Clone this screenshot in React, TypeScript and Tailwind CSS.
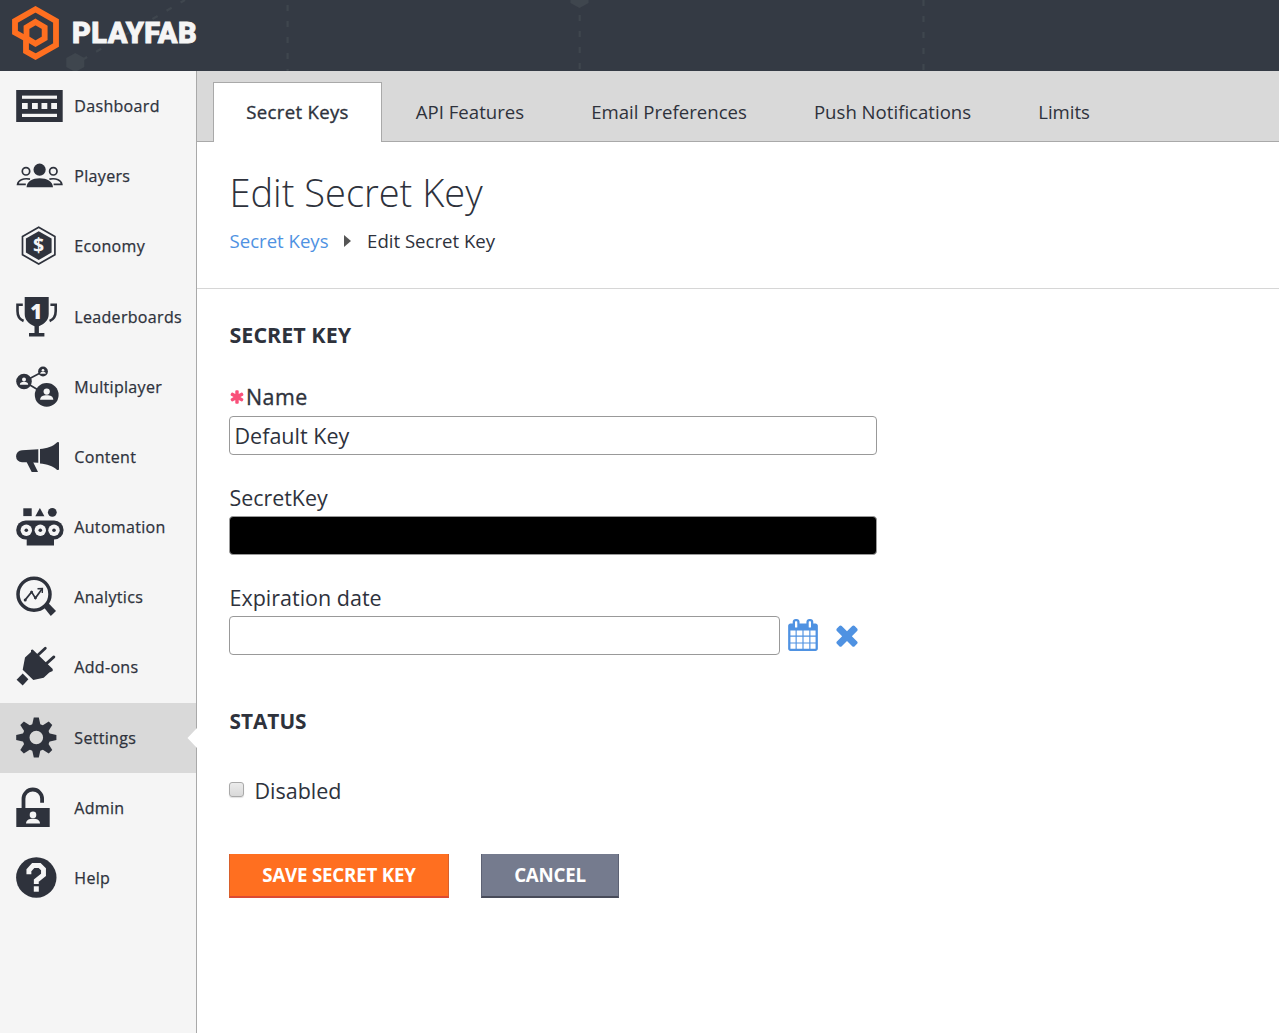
import type { ReactNode } from 'react';

const INK = '#2e323c';
const PAPER = '#f5f5f5';

function Person({ x, y, s }: { x: number; y: number; s: number }) {
  return (
    <g transform={`translate(${x} ${y}) scale(${s})`} fill={PAPER}>
      <circle cx="0" cy="-3" r="3.3" />
      <path d="M-7 5.6C-6.8 2 -4 .8 0 .8S6.8 2 7 5.6z" />
    </g>
  );
}

function Icon({ children, dy = 0 }: { children: ReactNode; dy?: number }) {
  return (
    <svg width="48" height="48" viewBox="0 0 48 48" className="shrink-0" fill={INK}>
      <g transform={`translate(0 ${dy})`}>{children}</g>
    </svg>
  );
}

const dashboardIcon = (
  <Icon>
    <rect x="0.2" y="8" width="46.5" height="32" />
    <g fill={PAPER}>
      <rect x="6" y="13.6" width="35" height="3.2" />
      <rect x="6" y="31.8" width="35" height="3.2" />
      <rect x="6" y="21" width="5.7" height="6" />
      <rect x="16" y="21" width="5.8" height="6" />
      <rect x="25.5" y="21" width="5.8" height="6" />
      <rect x="35.2" y="21" width="5.8" height="6" />
    </g>
  </Icon>
);

const playersIcon = (
  <Icon dy={0.5}>
    <circle cx="23.6" cy="17.2" r="6.1" />
    <path d="M10.5 34.8C11 28.5 16.5 25.8 23.7 25.8S36.5 28.5 37 34.8z" />
    <g fill="none" stroke={INK} strokeWidth="1.7">
      <circle cx="10" cy="18.8" r="3.7" />
      <circle cx="37.3" cy="18.8" r="3.7" />
      <path d="M9.8 31.8H1.6C2.2 27.6 7 25.4 14 26.6" />
      <path d="M37.6 31.8H45.8C45.2 27.6 40.4 25.4 33.4 26.6" />
    </g>
  </Icon>
);

const economyIcon = (
  <Icon dy={0.7}>
    <path d="M22.7 4.5L38.9 13.8V32L22.7 41.4L6.5 32V13.8z" fill="none" stroke={INK} strokeWidth="1.7" />
    <path d="M22.7 8.6L35.6 15.9V29.9L22.7 37.2L9.9 29.9V15.9z" />
    <text x="22.7" y="29.6" textAnchor="middle" fill={PAPER} className="font-['Open_Sans'] text-[19.5px] font-bold">$</text>
  </Icon>
);

const leaderboardsIcon = (
  <Icon>
    <path d="M8.7 4H32.7V21C32.7 27 28.5 31 22.9 33.2V40H28.4V43.5H13V40H18.5V33.2C12.9 31 8.7 27 8.7 21z" />
    <g fill="none" stroke={INK} strokeWidth="2.6">
      <path d="M6.8 11.8H1.5V18C1.5 23 3.5 26.4 7.6 28" />
      <path d="M34.4 11.8H39.7V18C39.7 23 37.7 26.4 33.6 28" />
    </g>
    <text x="20.2" y="25.6" textAnchor="middle" fill={PAPER} className="font-['Open_Sans'] text-[20.5px] font-extrabold">1</text>
  </Icon>
);

const multiplayerIcon = (
  <Icon>
    <path d="M27 8.5L8 18.5L30.7 31.9" fill="none" stroke={INK} strokeWidth="1.7" />
    <circle cx="30.7" cy="31.9" r="11.9" />
    <circle cx="8" cy="18.5" r="7.8" />
    <circle cx="27" cy="8.5" r="4.9" />
    <Person x={30.7} y={31.4} s={0.95} />
    <Person x={8} y={18.3} s={0.6} />
    <Person x={27} y={8.4} s={0.4} />
  </Icon>
);

const contentIcon = (
  <Icon>
    <path d="M6 17.3L22.3 16.2V29.8L17.3 29.4L22 38.9H15.7L10.7 29.2H6A5.9 5.9 0 0 1 6 17.3z" />
    <path d="M24 15.9C31 15.3 37 13.3 40.6 9.7C41.5 8.8 43 8.9 43 10.2V36C43 37.2 41.5 37.3 40.6 36.4C37 33 31 31.1 24 30.4z" />
  </Icon>
);

const automationIcon = (
  <Icon dy={0.3}>
    <rect x="7.3" y="5" width="8.4" height="7.8" />
    <path d="M23.9 4.6L28.4 12.9H19.3z" />
    <circle cx="36.3" cy="9" r="4.4" />
    <rect x="0.2" y="17.2" width="47.4" height="19" rx="9.5" />
    <rect x="10.7" y="33" width="27.3" height="9.2" />
    {[10.3, 24.3, 38].map((x) => (
      <g key={x}>
        <circle cx={x} cy="26.9" r="5.7" fill={PAPER} />
        <circle cx={x} cy="26.9" r="1.8" />
      </g>
    ))}
  </Icon>
);

const analyticsIcon = (
  <Icon dy={0.5}>
    <circle cx="18" cy="20.7" r="16" fill="none" stroke={INK} strokeWidth="3.5" />
    <path d="M27.6 33.6L32.3 29.6L40 37.4L34.8 42.6z" />
    <g fill="none" stroke={INK} strokeWidth="1.7">
      <path d="M9.2 26.4L15.6 18.4L19.4 24.6L25.8 15.8" />
      <path d="M21.5 15.2L26.4 15L26.3 19.6" strokeWidth="1.4" />
    </g>
    <circle cx="9.2" cy="26.4" r="1.5" />
    <circle cx="15.6" cy="18.6" r="1.4" />
    <circle cx="19.4" cy="24.4" r="1.4" />
  </Icon>
);

const addonsIcon = (
  <Icon>
    <path d="M6.7 29.4L12.4 35.2L6.7 41.4L.6 35.7z" />
    <path d="M15 5.9L16.7 5.5L36.7 25.1V27.1L33.3 28.4L27.7 33.7L17.3 36.1L6.7 25.7L9 13.4L15 8.1z" />
    <path d="M21.5 11.5L29.3 4.3M29.8 20.1L37.9 12.9" stroke={INK} strokeWidth="2.8" strokeLinecap="round" />
  </Icon>
);

const settingsIcon = (
  <Icon>
    <circle cx="20.3" cy="23.5" r="10.3" fill="none" stroke={INK} strokeWidth="7" />
    {[0, 45, 90, 135, 180, 225, 270, 315].map((a) => (
      <path key={a} d="M15.9 12L17.8 3.4H22.8L24.7 12z" transform={`rotate(${a} 20.3 23.5)`} />
    ))}
  </Icon>
);

const adminIcon = (
  <Icon>
    <rect x="0.3" y="24" width="33.4" height="19" />
    <path d="M7.5 25V14.8A9.3 9.3 0 0 1 26.1 14.8V18.8" fill="none" stroke={INK} strokeWidth="3.8" />
    <Person x={17} y={33.9} s={1} />
  </Icon>
);

const helpIcon = (
  <Icon dy={0.3}>
    <circle cx="20.3" cy="23.2" r="20.2" />
    <path d="M12.9 20V16L17.2 11.2H23.6L27.5 15V20.5L20.3 26.4V29.6" fill="none" stroke={PAPER} strokeWidth="4.9" />
    <rect x="17.8" y="32" width="5" height="5.4" fill={PAPER} />
  </Icon>
);

const NAV: { label: string; icon: ReactNode; active?: boolean }[] = [
  { label: 'Dashboard', icon: dashboardIcon },
  { label: 'Players', icon: playersIcon },
  { label: 'Economy', icon: economyIcon },
  { label: 'Leaderboards', icon: leaderboardsIcon },
  { label: 'Multiplayer', icon: multiplayerIcon },
  { label: 'Content', icon: contentIcon },
  { label: 'Automation', icon: automationIcon },
  { label: 'Analytics', icon: analyticsIcon },
  { label: 'Add-ons', icon: addonsIcon },
  { label: 'Settings', icon: settingsIcon, active: true },
  { label: 'Admin', icon: adminIcon },
  { label: 'Help', icon: helpIcon },
];

const TABS = ['API Features', 'Email Preferences', 'Push Notifications', 'Limits'];

function Header() {
  return (
    <header className="relative flex h-[71px] shrink-0 items-start overflow-hidden bg-[#343a44] pl-3 pt-1.5">
      <svg className="absolute inset-0" width="1279" height="71" viewBox="0 0 1279 71" aria-hidden="true">
        <g stroke="#3f464e" strokeWidth="2.2" fill="none">
          <path d="M287.6 5V71" strokeDasharray="6 10" />
          <path d="M579.7 15V71" strokeDasharray="6 10" />
          <path d="M923.5 0V71" strokeDasharray="6 10" />
          <path d="M82 60L185 0" strokeDasharray="6 10.3" />
        </g>
        <path d="M75.3 53L84.3 58V67L75.3 72L66.3 67V58zM570.5 0H588.5V3L579.5 8L570.5 3z" fill="#3f464e" />
      </svg>
      <svg className="relative" width="47" height="54" viewBox="36 18 141 162">
        <g fill="none" stroke="#ff6f20" strokeWidth="17.5">
          <path d="M106.5 66L134 82V115L106.5 131L79.5 115V82z" />
          <path d="M80 117L45 97.5V63L106.5 28L168 63V135L106.5 170L78 154V113" />
        </g>
      </svg>
      <span className="relative ml-[13px] mt-[9px] font-[Roboto] text-[29px] font-black leading-9 tracking-[0.4px] text-[#f5f5f5] [-webkit-text-stroke:0.8px_#f5f5f5]">
        PLAYFAB
      </span>
    </header>
  );
}

function Sidebar() {
  return (
    <nav className="w-[197px] shrink-0 border-r border-[#a9a9a9] bg-[#f5f5f5]">
      {NAV.map((item) => (
        <a
          key={item.label}
          className={
            item.active
              ? 'relative flex h-[70.2px] items-center gap-[10.3px] bg-[#d9d9d9] pl-4'
              : 'relative flex h-[70.2px] items-center gap-[10.3px] pl-4'
          }
        >
          {item.icon}
          <span className="-mt-[0.3px] text-base font-medium leading-6 tracking-[0.32px] [-webkit-text-stroke:0.25px_currentColor]">
            {item.label}
          </span>
          {item.active && (
            <svg className="absolute -right-px top-[25px]" width="10" height="20" viewBox="0 0 10 20">
              <path d="M10 0V20L0.5 10z" fill="#fff" />
            </svg>
          )}
        </a>
      ))}
    </nav>
  );
}

export default function App() {
  return (
    <div className="flex h-[1033px] flex-col bg-white font-['Open_Sans',sans-serif] text-[#2e323c]">
      <Header />
      <div className="flex min-h-0 flex-1">
        <Sidebar />
        <main className="min-w-0 flex-1">
          <div className="flex h-[71px] items-end border-b border-[#a9a9a9] bg-[#d9d9d9] pl-4 text-[18.6px]">
            <a className="-mb-px flex h-[60px] w-[169px] items-center justify-center border border-b-0 border-[#a9a9a9] bg-white pb-0.5 font-medium tracking-[0.3px] [-webkit-text-stroke:0.35px_currentColor]">
              Secret Keys
            </a>
            {TABS.map((tab) => (
              <a key={tab} className="flex h-[59px] items-center pl-[33.8px] pr-[33.3px]">{tab}</a>
            ))}
          </div>

          <div className="h-[147px] border-b border-[#d6d6d6] pl-[32.5px] pt-[23px]">
            <h1 className="text-[38px] font-light leading-[54px]">Edit Secret Key</h1>
            <div className="mt-2 flex h-7 items-center text-[18.6px]">
              <a className="text-[#4f92e2]">Secret Keys</a>
              <svg className="ml-[15px] mr-[16.5px]" width="7" height="12" viewBox="0 0 7 12">
                <path d="M0 0L7 6L0 12z" fill="#555" />
              </svg>
              <span>Edit Secret Key</span>
            </div>
          </div>

          <form className="pl-8 pt-8 text-[21.4px] leading-7">
            <h2 className="pl-[0.5px] text-[21.5px] font-bold">SECRET KEY</h2>

            <label className="mt-[34px] flex items-center font-medium tracking-[0.45px] [-webkit-text-stroke:0.35px_currentColor]">
              <svg className="mr-px -mt-px" width="16" height="16" viewBox="100 0 1592 1792" fill="#f9507a">
                <path d="M1546 1050q46 26 59.5 77.5t-12.5 97.5l-64 110q-26 46-77.5 59.5t-97.5-12.5l-266-153v307q0 52-38 90t-90 38h-128q-52 0-90-38t-38-90v-307l-266 153q-46 26-97.5 12.5t-77.5-59.5l-64-110q-26-46-12.5-97.5t59.5-77.5l266-154-266-154q-46-26-59.5-77.5t12.5-97.5l64-110q26-46 77.5-59.5t97.5 12.5l266 153v-307q0-52 38-90t90-38h128q52 0 90 38t38 90v307l266-153q46-26 97.5-12.5t77.5 59.5l64 110q26 46 12.5 97.5t-59.5 77.5l-266 154z" />
              </svg>
              Name
            </label>
            <input
              className="mt-[5px] block h-[39px] w-[648px] rounded border border-[#999] bg-white px-[4.5px] text-[21.5px] outline-none"
              defaultValue="Default Key"
            />

            <label className="mt-[29px] block pl-[0.5px]">SecretKey</label>
            <div className="mt-1 h-[39px] w-[648px] rounded border border-[#999] bg-black" />

            <label className="mt-[29px] block pl-[0.5px] text-[21.5px]">Expiration date</label>
            <div className="mt-1 flex items-start">
              <input className="h-[39px] w-[551px] rounded border border-[#999] bg-white px-[5px] outline-none" />
              <svg className="ml-[7px] mt-[3px]" width="32" height="32" viewBox="0 0 1792 1792" fill="#4f92e2">
                <path d="M192 1664h288v-288h-288v288zm352 0h320v-288h-320v288zm-352-352h288v-320h-288v320zm352 0h320v-320h-320v320zm-352-384h288v-288h-288v288zm736 736h320v-288h-320v288zm-384-736h320v-288h-320v288zm768 736h288v-288h-288v288zm-384-352h320v-320h-320v320zm-352-864v-288q0-13-9.5-22.5t-22.5-9.5h-64q-13 0-22.5 9.5t-9.5 22.5v288q0 13 9.5 22.5t22.5 9.5h64q13 0 22.5-9.5t9.5-22.5zm736 864h288v-320h-288v320zm-384-384h320v-288h-320v288zm384 0h288v-288h-288v288zm32-480v-288q0-13-9.5-22.5t-22.5-9.5h-64q-13 0-22.5 9.5t-9.5 22.5v288q0 13 9.5 22.5t22.5 9.5h64q13 0 22.5-9.5t9.5-22.5zm384-64v1280q0 52-38 90t-90 38h-1408q-52 0-90-38t-38-90v-1280q0-52 38-90t90-38h128v-96q0-66 47-113t113-47h64q66 0 113 47t47 113v96h384v-96q0-66 47-113t113-47h64q66 0 113 47t47 113v96h128q52 0 90 38t38 90z" />
              </svg>
              <svg className="ml-3 mt-[3px]" width="32" height="32" viewBox="0 0 1792 1792" fill="#4f92e2">
                <path d="M1490 1322q0 40-28 68l-136 136q-28 28-68 28t-68-28l-294-294-294 294q-28 28-68 28t-68-28l-136-136q-28-28-28-68t28-68l294-294-294-294q-28-28-28-68t28-68l136-136q28-28 68-28t68 28l294 294 294-294q28-28 68-28t68 28l136 136q28 28 28 68t-28 68l-294 294 294 294q28 28 28 68z" />
              </svg>
            </div>

            <h2 className="mt-[52px] pl-[0.5px] text-[20.8px] font-bold">STATUS</h2>

            <label className="mt-[42px] flex items-center text-[21.5px]">
              <span className="mr-[10.5px] mt-[-3px] h-[15px] w-[15px] rounded-[3px] border border-[#a9a9a9] bg-linear-to-b from-[#ececec] to-[#d9d9d9] shadow-[0_1px_1px_rgba(0,0,0,0.12)]" />
              Disabled
            </label>

            <div className="mt-[49px] flex gap-8 text-[18.7px] font-bold tracking-[-0.2px] text-white">
              <button className="h-11 w-[220px] border-x border-b-2 border-x-[#d8602b] border-b-[#dc4a32] bg-[#ff6f20]">
                SAVE SECRET KEY
              </button>
              <button className="h-11 w-[138px] border-x border-b-2 border-x-[#5d6274] border-b-[#484b59] bg-[#757b8e]">
                CANCEL
              </button>
            </div>
          </form>
        </main>
      </div>
    </div>
  );
}
